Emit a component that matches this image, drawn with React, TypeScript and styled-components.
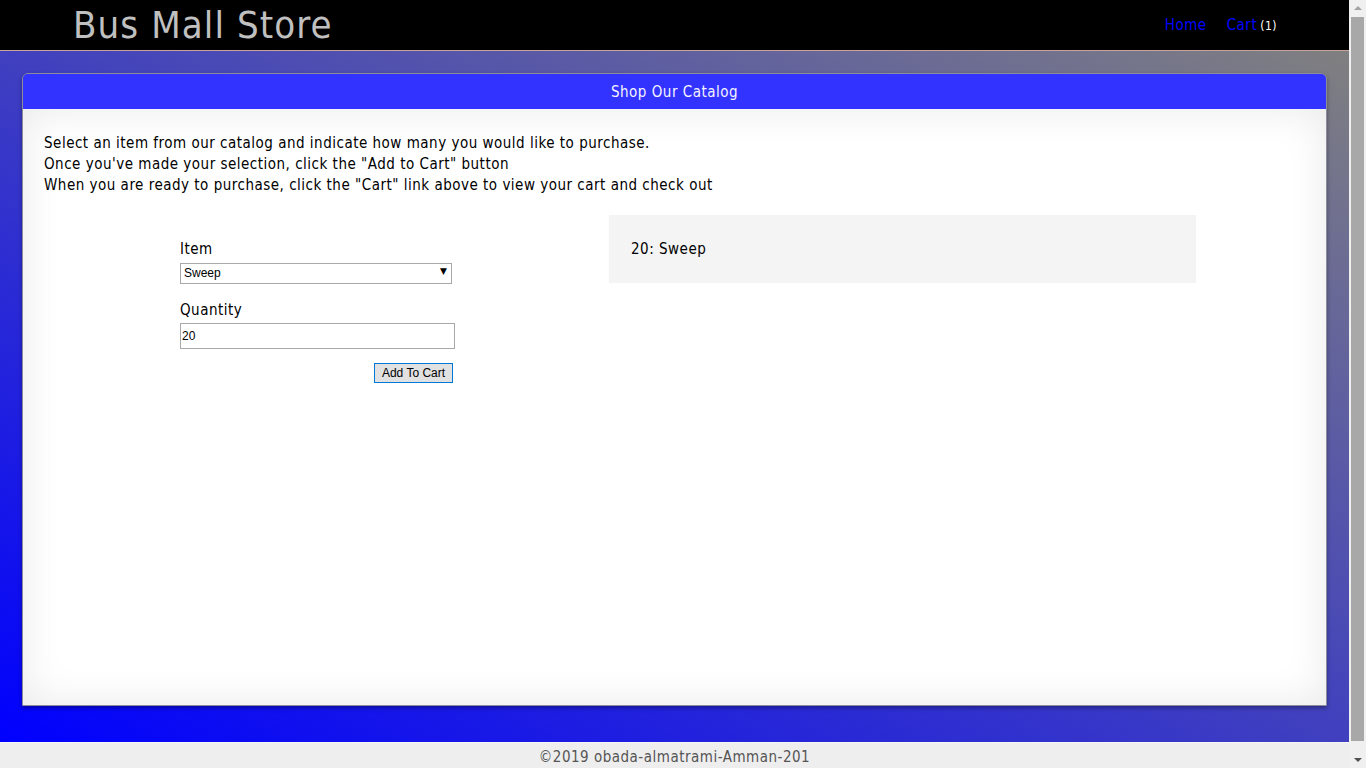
import React from "react";
import styled, { createGlobalStyle } from "styled-components";

const Global = createGlobalStyle`
  body {
    margin: 0;
    font-family: Tahoma, "DejaVu Sans Condensed", "DejaVu Sans", sans-serif;
    letter-spacing: 0.5px;
    color: #000;
    overflow: hidden;
  }
  * { box-sizing: border-box; }
`;

const Window = styled.div`
  display: flex;
  height: 100vh;
  overflow: hidden;
`;

const Page = styled.div`
  flex: 1;
  min-width: 0;
`;

const ScrollBar = styled.div`
  width: 17px;
  flex: none;
  background: #f0f0f0;
  display: flex;
  flex-direction: column;
`;

const ScrollButton = styled.div<{ $down?: boolean }>`
  height: 17px;
  flex: none;
  display: flex;
  align-items: center;
  justify-content: center;

  &::before {
    content: "";
    width: 0;
    height: 0;
    border-left: 4px solid transparent;
    border-right: 4px solid transparent;
    ${(p) =>
      p.$down
        ? "border-top: 4px solid #505050; margin-top: 1px;"
        : "border-bottom: 4px solid #a3a3a3; margin-bottom: 1px;"}
  }
`;

const Track = styled.div`
  flex: 1;
  padding: 0 2px 10px;
  display: flex;
`;

const Thumb = styled.div`
  flex: 1;
  background: #a8a8a8;
`;

const Header = styled.header`
  height: 51px;
  background: #000;
  border-bottom: 1px solid #c9a49a;
  display: flex;
  align-items: center;
  justify-content: space-between;
  padding: 0 72px 0 73px;
`;

const Title = styled.h1`
  margin: 0;
  font-size: 38px;
  font-weight: normal;
  letter-spacing: 1.1px;
  color: #c0c0c0;
  line-height: 50px;
`;

const Nav = styled.nav`
  display: flex;
  align-items: baseline;
  gap: 20px;
  font-size: 15px;
`;

const NavLink = styled.a`
  color: #0000ff;
  text-decoration: none;
`;

const Count = styled.span`
  color: #fff;
  font-size: 12px;
  margin-left: 3px;
`;

const Main = styled.main`
  background: linear-gradient(to top right, #0000ff, #808080);
  padding: 22px 22px 36px;
`;

const Card = styled.section`
  border: 1px solid #8c8c9c;
  border-radius: 6px 6px 0 0;
  overflow: hidden;
  box-shadow: 0 2px 4px rgba(0, 0, 0, 0.35);
  display: flex;
  flex-direction: column;
  height: 633px;
`;

const CardHead = styled.div`
  background: #3333ff;
  color: #f4f4ff;
  font-size: 15px;
  text-align: center;
  height: 35px;
  line-height: 36px;
`;

const CardBody = styled.div`
  flex: 1;
  background: #fff;
  box-shadow: inset 0 0 40px rgba(0, 0, 0, 0.09);
  padding: 24px 21px;
`;

const Intro = styled.p`
  margin: 0;
  font-size: 15px;
  line-height: 21px;
`;

const Row = styled.div`
  display: flex;
  align-items: flex-start;
  margin-top: 19px;
`;

const FormCol = styled.form`
  margin-left: 136px;
  width: 275px;
  padding-top: 24px;
  display: flex;
  flex-direction: column;
`;

const Label = styled.label<{ $top?: number }>`
  font-size: 15px;
  line-height: 21px;
  margin-top: ${(p) => p.$top ?? 0}px;
`;

const SelectWrap = styled.div`
  position: relative;
  width: 272px;
  margin-top: 2px;
`;

const Select = styled.select`
  appearance: none;
  width: 100%;
  height: 21px;
  border: 1px solid #a9a9a9;
  background: #fff;
  font-family: "Liberation Sans", Arial, sans-serif;
  font-size: 12px;
  letter-spacing: 0;
  padding: 0 0 0 3px;
  color: #000;
  border-radius: 0;
`;

const Arrow = styled.span`
  position: absolute;
  right: 5px;
  top: 4px;
  font-size: 9px;
  letter-spacing: 0;
  pointer-events: none;
  font-family: "DejaVu Sans", sans-serif;
`;

const Input = styled.input`
  width: 275px;
  height: 26px;
  margin-top: 2px;
  border: 1px solid #a9a9a9;
  font-family: "Liberation Sans", Arial, sans-serif;
  font-size: 12px;
  letter-spacing: 0;
  padding: 0 1px;
  color: #000;
`;

const Button = styled.button`
  align-self: flex-end;
  margin: 14px 2px 0 0;
  height: 20px;
  width: 79px;
  padding: 0;
  background: #e1e1e1;
  border: 1px solid #0078d7;
  font-family: "Liberation Sans", Arial, sans-serif;
  font-size: 12px;
  letter-spacing: 0;
  color: #000;
`;

const CartBox = styled.div`
  margin-left: 154px;
  width: 587px;
  height: 67px;
  background: #f4f4f4;
  padding: 24px 22px 22px;
  font-size: 15px;
  line-height: 21px;
  box-shadow: 0 1px 1px rgba(0, 0, 0, 0.04);
`;

const Footer = styled.footer`
  background: #eeeeee;
  border-top: 1px solid #f6f6f6;
  height: 37px;
  text-align: center;
  color: #555;
  font-size: 15px;
  padding-top: 5px;
`;

export default function App() {
  return (
    <>
      <Global />
      <Window>
        <Page>
          <Header>
            <Title>Bus Mall Store</Title>
            <Nav>
              <NavLink href="#">Home</NavLink>
              <span>
                <NavLink href="#">Cart</NavLink>
                <Count>(1)</Count>
              </span>
            </Nav>
          </Header>
          <Main>
            <Card>
              <CardHead>Shop Our Catalog</CardHead>
              <CardBody>
                <Intro>
                  Select an item from our catalog and indicate how many you would like to purchase.
                  <br />
                  Once you've made your selection, click the "Add to Cart" button
                  <br />
                  When you are ready to purchase, click the "Cart" link above to view your cart and check out
                </Intro>
                <Row>
                  <FormCol onSubmit={(e) => e.preventDefault()}>
                    <Label htmlFor="items">Item</Label>
                    <SelectWrap>
                      <Select id="items" defaultValue="Sweep">
                        <option>Sweep</option>
                      </Select>
                      <Arrow>▼</Arrow>
                    </SelectWrap>
                    <Label htmlFor="quantity" $top={16}>Quantity</Label>
                    <Input id="quantity" defaultValue="20" />
                    <Button type="submit">Add To Cart</Button>
                  </FormCol>
                  <CartBox>20: Sweep</CartBox>
                </Row>
              </CardBody>
            </Card>
          </Main>
          <Footer>©2019 obada-almatrami-Amman-201</Footer>
        </Page>
        <ScrollBar aria-hidden="true">
          <ScrollButton />
          <Track>
            <Thumb />
          </Track>
          <ScrollButton $down />
        </ScrollBar>
      </Window>
    </>
  );
}
